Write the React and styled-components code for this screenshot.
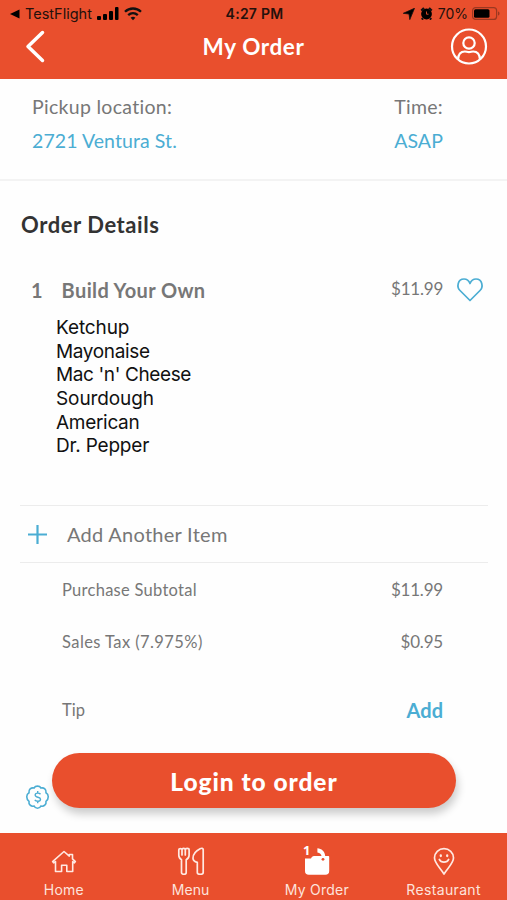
import React from "react";
import styled, { createGlobalStyle } from "styled-components";

const orange = "#e94f2d";
const blue = "#4badd3";
const grey = "#777777";

const GlobalStyle = createGlobalStyle`
  * {
    box-sizing: border-box;
  }

  body {
    margin: 0;
    background: #fefefe;
    font-family: Lato, "Liberation Sans", sans-serif;
  }
`;

const Screen = styled.div`
  width: 507px;
  height: 900px;
  display: flex;
  flex-direction: column;
  background: #fefefe;
  overflow: hidden;
`;

const Label = styled.span`
  font-family: ${(p) => (p.$system ? "Inter, sans-serif" : "inherit")};
  font-size: ${(p) => p.$size}px;
  font-weight: ${(p) => p.$weight || 400};
  letter-spacing: ${(p) => p.$track || 0}px;
  color: ${(p) => p.$color || grey};
  line-height: 24px;
  white-space: nowrap;
`;

const Header = styled.header`
  height: 79px;
  flex: none;
  background: ${orange};
`;

const StatusBar = styled.div`
  height: 27px;
  padding: 0 7px 0 9px;
  display: grid;
  grid-template-columns: 1fr auto 1fr;
  align-items: center;
`;

const StatusGroup = styled.div`
  display: flex;
  align-items: center;
  gap: ${(p) => p.$gap}px;
  justify-content: ${(p) => (p.$end ? "flex-end" : "flex-start")};
`;

const TitleBar = styled.div`
  height: 40px;
  padding: 0 19px 0 25px;
  display: grid;
  grid-template-columns: 32px 1fr 38px;
  align-items: center;
  text-align: center;
`;

const Pickup = styled.section`
  height: 102px;
  flex: none;
  padding: 11px 64px 0 32px;
  display: flex;
  justify-content: space-between;
  border-bottom: 2px solid #f3f3f3;
`;

const PickupColumn = styled.div`
  display: flex;
  flex-direction: column;
  gap: 10px;
  padding-top: 5px;
`;

const Details = styled.section`
  height: 325px;
  flex: none;
  padding: 32px 24px 0 21px;
`;

const ItemRow = styled.div`
  display: flex;
  align-items: center;
  height: 28px;
  margin-top: 39px;
  padding-left: 10px;
`;

const ItemName = styled.div`
  width: 360px;
  flex: none;
  display: flex;
  gap: 19px;
`;

const ItemPrice = styled.div`
  width: 52px;
  margin-right: 13px;
  padding-bottom: 3px;
`;

const HeartIcon = styled.svg`
  flex: none;
`;

const Options = styled.ul`
  list-style: none;
  margin: 12px 0 0 35px;
  padding: 0;
  display: flex;
  flex-direction: column;
`;

const Option = styled.li`
  height: 23.65px;
  font: 400 19px/23.65px Inter, sans-serif;
  letter-spacing: ${(p) => p.$track}px;
  color: #111;
`;

const AddRow = styled.div`
  height: 58px;
  flex: none;
  margin: -1px 19px 0 20px;
  padding-left: 8px;
  display: flex;
  align-items: center;
  gap: 20px;
  border-top: 1px solid #ececec;
  border-bottom: 1px solid #ececec;
`;

const Totals = styled.section`
  flex: 1;
  padding: 15px 64px 0 62px;
`;

const TotalRow = styled.div`
  height: 24px;
  margin-bottom: ${(p) => p.$after}px;
  display: flex;
  align-items: center;
  justify-content: space-between;
`;

const Checkout = styled.div`
  height: 80px;
  flex: none;
  padding-left: 25px;
  display: flex;
  align-items: flex-start;
  gap: 2px;
`;

const Coupon = styled.div`
  width: 25px;
  height: 25px;
  margin-top: 32px;
`;

const LoginButton = styled.button`
  width: 404px;
  height: 55px;
  padding: 2px 0 0;
  border: 0;
  border-radius: 28px;
  font-family: inherit;
  background: ${orange};
  box-shadow: 2px 6px 9px rgba(0, 0, 0, 0.2);
`;

const TabBar = styled.nav`
  height: 67px;
  flex: none;
  display: grid;
  grid-template-columns: repeat(4, 1fr);
  background: ${orange};
`;

const Tab = styled.div`
  display: flex;
  flex-direction: column;
  align-items: center;
  padding: 11px 0 0 ${(p) => p.$shift}px;
`;

const BagIcon = styled.div`
  position: relative;
  height: 34px;
`;

const Count = styled.span`
  position: absolute;
  left: 0;
  top: -1px;
  color: #fff;
  font: 700 13px/14px "Noto Sans", sans-serif;
`;

const options = [
  ["Ketchup", -0.1],
  ["Mayonaise", -0.35],
  ["Mac 'n' Cheese", -0.38],
  ["Sourdough", -0.1],
  ["American", -0.3],
  ["Dr. Pepper", -0.2],
];

const stroke = {
  fill: "none",
  stroke: "#ffe9e2",
  strokeWidth: 1.7,
  strokeLinejoin: "round",
  strokeLinecap: "round",
};

const Status = () => (
  <StatusBar>
    <StatusGroup $gap={5}>
      <svg width="11" height="10" viewBox="0 0 11 10"><path d="M1 5 10.500 .5v9z" /></svg>
      <Label $system $size={14.500} $track={0} $color="#24110c">TestFlight</Label>
      <svg width="22" height="14" viewBox="0 0 22 14">
        <rect x="0" y="9" width="4" height="4" rx="1" />
        <rect x="6" y="7" width="4" height="6" rx="1" />
        <rect x="12" y="4" width="4" height="9" rx="1" />
        <rect x="18" y="0" width="3.500" height="13" rx="1" />
      </svg>
      <svg width="18" height="14" viewBox="0 0 18 14" fill="none" stroke="#111" strokeWidth="2.300">
        <path d="M1 4.800C5.500.4 12.500.4 17 4.800" />
        <path d="M4.200 8.200c2.800-2.600 6.800-2.600 9.600 0" />
        <path d="M6.600 10.700c1.500-1.300 3.300-1.300 4.800 0L9 13.300z" fill="#111" stroke="none" />
      </svg>
    </StatusGroup>
    <Label $system $size={14} $weight={600} $track={0.25} $color="#24110c">4:27 PM</Label>
    <StatusGroup $gap={4} $end>
      <svg width="12" height="12" viewBox="0 0 12 12"><path d="M11.500.3 6.800 11.600 6 6 .3 5.300z" stroke="#111" strokeWidth=".8" /></svg>
      <svg width="15" height="13" viewBox="-1 0 15 13">
        <circle cx="6.500" cy="7" r="5.400" />
        <path d="M1.300 3.600 4 1M11.700 3.600 9 1M3 11.300 1.800 12.600M10 11.300l1.200 1.300" stroke="#111" strokeWidth="2.200" />
        <path d="M6.500 4.500v2.700h2" fill="none" stroke={orange} strokeWidth=".9" />
      </svg>
      <Label $system $size={14} $track={0} $color="#24110c">70%</Label>
      <svg width="28" height="13" viewBox="0 0 28 13">
        <rect x=".6" y=".6" width="24" height="11.800" rx="3" fill="none" stroke="#9b3821" strokeWidth="1.200" />
        <rect x="2" y="2.300" width="15.500" height="8.400" rx="1.500" />
        <path d="M26 4.500c2 .6 2 3.400 0 4z" fill="#9b3821" />
      </svg>
    </StatusGroup>
  </StatusBar>
);

const HomeIcon = () => (
  <svg width="26" height="34" viewBox="0 0 26 34" {...stroke} strokeWidth={1.6}>
    <path d="M1.600 17.600 13 7.500l5.300 4.600V10.500h3.200v4.400l2.900 2.700-1 1.200-1.700-1.200V27.500h-5.900v-6.200h-5.200v6.200H4.500v-9.900l-1.900 1.200z" />
  </svg>
);

const MenuIcon = () => (
  <svg width="28" height="34" viewBox="0 0 28 34" {...stroke}>
    <path d="M1.800 5.800C1.800 4.300 5 4.300 5 5.800V11M5 5.800c0-1.800 3.300-1.800 3.300 0V11M8.300 5.800c0-1.800 3.800-1.800 3.800 0v5.400c0 2.400-1.400 3.600-2.900 4.500V28.500c0 2.300-4.700 2.300-4.700 0V15.700c-1.500-.9-2.700-2.100-2.700-4.500V5.800" />
    <path d="M26.200 5.500c0-1.400-1.800-1.500-2.700-.9-4.700 2.400-7.500 5.700-7.500 9.600 0 2 1.900 3.500 4.300 4.200V28.500c0 2.300 5.900 2.300 5.900 0z" />
  </svg>
);

const OrderIcon = () => (
  <BagIcon>
    <svg width="28" height="34" viewBox="0 0 28 34" fill="#fff">
      <path d="M2 14.500h6c.6-1.500 1.600-2.400 3-2.600h7.500c-.3-2-1.500-3.100-4.100-3.500V4.200c4.100.4 7.400 2.800 7.800 7.700H25.200c.6 0 1 .4 1 1V27c0 2.600-1.300 3.800-3.800 3.800H5.800C3.300 30.800 2 29.600 2 27z" />
      <circle cx="20" cy="15.300" r="1.400" fill={orange} />
    </svg>
    <Count>1</Count>
  </BagIcon>
);

const PinIcon = () => (
  <svg width="24" height="34" viewBox="0 0 24 34" {...stroke}>
    <path d="M12 30C8.500 24 2.500 19.500 2.500 13.800a9.500 9.200 0 0 1 19 0C21.500 19.500 15.500 24 12 30z" />
    <path d="M7.300 15.400c1.800 3.700 7.600 3.700 9.400 0" />
    <path d="M8.800 11.500v.5M15.200 11.500v.5" strokeWidth="2.300" />
  </svg>
);

const tabs = [
  { name: "Home", Icon: HomeIcon, track: 0.2, shift: 1 },
  { name: "Menu", Icon: MenuIcon, track: 0.1, shift: 1 },
  { name: "My Order", Icon: OrderIcon, track: 0.25, shift: 0 },
  { name: "Restaurant", Icon: PinIcon, track: 0.35, shift: 0 },
];

const App = () => (
  <>
    <GlobalStyle />
    <Screen>
      <Header>
        <Status />
        <TitleBar>
          <svg width="21" height="34" viewBox="0 0 21 34" fill="none" stroke="#fff" strokeWidth="3.500" strokeLinecap="round" strokeLinejoin="round">
            <path d="M17.500 2.500 3 16.500l14.500 14" />
          </svg>
          <Label $size={22.5} $weight={700} $track={0.6} $color="#fff">My Order</Label>
          <svg width="38" height="38" viewBox="0 0 38 38" fill="none" stroke="#fff" strokeWidth="2.200">
            <circle cx="19" cy="18.500" r="17" />
            <circle cx="19" cy="15" r="5.700" />
            <path d="M8 31.500c.3-5.500 3.300-8 6.800-8 1.600 0 2.400.6 4.200.6s2.600-.6 4.200-.6c3.500 0 6.500 2.500 6.800 8" />
          </svg>
        </TitleBar>
      </Header>

      <Pickup>
        <PickupColumn>
          <Label $size={19.5} $track={0.3}>Pickup location:</Label>
          <Label $size={19.5} $track={0.08} $color={blue}>2721 Ventura St.</Label>
        </PickupColumn>
        <PickupColumn>
          <Label $size={19.5} $track={0.3}>Time:</Label>
          <Label $size={19.5} $track={0.1} $color={blue}>ASAP</Label>
        </PickupColumn>
      </Pickup>

      <Details>
        <Label $size={22} $weight={700} $track={0.57} $color="#333">Order Details</Label>
        <ItemRow>
          <ItemName>
            <Label $size={20} $weight={700}>1</Label>
            <Label $size={20} $weight={700} $track={0.38}>Build Your Own</Label>
          </ItemName>
          <ItemPrice>
            <Label $size={17} $track={-0.2}>$11.99</Label>
          </ItemPrice>
          <HeartIcon width="28" height="26" viewBox="0 0 28 26" fill="none" stroke={blue} strokeWidth="1.700">
            <path d="M14 23.500 4 13.500C.5 10 1.500 2 8 2c3 0 5 2 6 4.500C15 4 17 2 20 2c6.500 0 7.500 8 4 11.500z" strokeLinejoin="round" />
          </HeartIcon>
        </ItemRow>
        <Options>
          {options.map(([name, track]) => (
            <Option key={name} $track={track}>{name}</Option>
          ))}
        </Options>
      </Details>

      <AddRow>
        <svg width="19" height="19" viewBox="0 0 19 19" stroke={blue} strokeWidth="2.200">
          <path d="M9.500 0v19M0 9.500h19" />
        </svg>
        <Label $size={20} $track={0.27}>Add Another Item</Label>
      </AddRow>

      <Totals>
        <TotalRow $after={28}>
          <Label $size={16.5} $track={0.27}>Purchase Subtotal</Label>
          <Label $size={17} $track={-0.2}>$11.99</Label>
        </TotalRow>
        <TotalRow $after={44}>
          <Label $size={16.5} $track={0.42}>Sales Tax (7.975%)</Label>
          <Label $size={17} $track={-0.2}>$0.95</Label>
        </TotalRow>
        <TotalRow $after={0}>
          <Label $size={16.5}>Tip</Label>
          <Label $size={20} $weight={700} $color={blue}>Add</Label>
        </TotalRow>
      </Totals>

      <Checkout>
        <Coupon>
          <svg width="25" height="25" viewBox="0 0 25 25" fill="none" stroke={blue} strokeWidth="1.600">
            <path d="M9 3c1.500-2.500 5.500-2.500 7 0 3-.8 5.500 1.700 5 4.700 3 1.600 3 6.300 0 8.600.6 3.200-2.200 5.600-5 4.700-1.500 3-5.500 3-7 0-3 .9-5.600-1.500-5-4.700-3-2.300-3-7 0-8.600-.5-3 2-5.500 5-4.700z" />
            <path d="M15.500 9.200c-1.200-1.500-5.300-1.500-5.300.8 0 3 5.300 1.500 5.300 4.300 0 2.600-4.600 2.400-5.700.5M12.700 6v2m0 8.200v2.100" strokeWidth="1.400" />
          </svg>
        </Coupon>
        <LoginButton>
          <Label $size={24.5} $weight={900} $track={0.95} $color="#fff">Login to order</Label>
        </LoginButton>
      </Checkout>

      <TabBar>
        {tabs.map(({ name, Icon, track, shift }) => (
          <Tab key={name} $shift={shift}>
            <Icon />
            <Label $system $size={14} $track={track} $color="#fde3dc">{name}</Label>
          </Tab>
        ))}
      </TabBar>
    </Screen>
  </>
);

export default App;
